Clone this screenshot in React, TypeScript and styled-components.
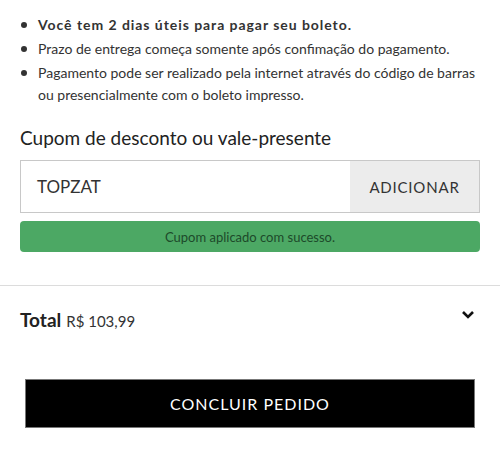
import React from "react";
import styled, { createGlobalStyle } from "styled-components";

const Global = createGlobalStyle`
  html, body { margin: 0; padding: 0; background: #fff; }
  body { font-family: Lato, "Open Sans", sans-serif; color: #333; }
  * { box-sizing: border-box; }
`;

const Page = styled.div`
  width: 500px;
  height: 450px;
  overflow: hidden;
  display: flex;
  flex-direction: column;
`;

const Section = styled.div`
  padding: 0 20px;
`;

const List = styled.ul`
  margin: 0;
  padding: 14px 0 0 18px;
  list-style: none;
  display: flex;
  flex-direction: column;
  gap: 2px;
`;

const Item = styled.li<{ $bold?: boolean }>`
  position: relative;
  font-size: 14px;
  line-height: 22px;
  color: #333;
  font-weight: ${(p) => (p.$bold ? 700 : 400)};
  letter-spacing: ${(p) => (p.$bold ? "0.95px" : "0")};
  &::before {
    content: "";
    position: absolute;
    left: -17px;
    top: 8px;
    width: 6px;
    height: 6px;
    border-radius: 50%;
    background: #333;
  }
`;

const Heading = styled.h2`
  margin: 19px 0 9px;
  font-size: 19px;
  line-height: 26px;
  font-weight: 400;
  color: #222;
`;

const CouponRow = styled.div`
  display: flex;
  height: 53px;
  border: 1px solid #c8c8c8;
`;

const CouponInput = styled.div`
  flex: 1;
  display: flex;
  align-items: center;
  padding-left: 16px;
  font-size: 17px;
  color: #333;
  background: #fff;
`;

const AddButton = styled.div`
  width: 129px;
  display: flex;
  align-items: center;
  justify-content: center;
  background: #ececec;
  font-size: 15px;
  letter-spacing: 0.8px;
  color: #333;
`;

const Success = styled.div`
  margin-top: 8px;
  height: 31px;
  border-radius: 4px;
  background: #4ca864;
  color: #1d4a2a;
  font-size: 13px;
  display: flex;
  align-items: center;
  justify-content: center;
`;

const Divider = styled.hr`
  margin: 33px 0 0;
  border: none;
  border-top: 1px solid #dcdcdc;
`;

const TotalRow = styled.div`
  display: flex;
  align-items: flex-start;
  justify-content: space-between;
  padding: 22px 20px 0;
`;

const TotalLabel = styled.div`
  display: flex;
  align-items: baseline;
  gap: 5px;
`;

const TotalWord = styled.span`
  font-size: 19px;
  font-weight: 700;
  color: #222;
`;

const TotalValue = styled.span`
  font-size: 15px;
  color: #333;
`;

const Chevron = styled.svg`
  margin-top: 2px;
  margin-right: 5px;
`;

const Finish = styled.div`
  margin: 48px 25px 0;
  height: 49px;
  background: #000;
  border: 1px solid #777;
  color: #fff;
  font-size: 16px;
  letter-spacing: 1px;
  display: flex;
  align-items: center;
  justify-content: center;
`;

export default function App() {
  return (
    <Page>
      <Global />
      <Section>
        <List>
          <Item $bold>Você tem 2 dias úteis para pagar seu boleto.</Item>
          <Item>Prazo de entrega começa somente após confimação do pagamento.</Item>
          <Item>
            Pagamento pode ser realizado pela internet através do código de barras ou
            presencialmente com o boleto impresso.
          </Item>
        </List>
        <Heading>Cupom de desconto ou vale-presente</Heading>
        <CouponRow>
          <CouponInput>TOPZAT</CouponInput>
          <AddButton>ADICIONAR</AddButton>
        </CouponRow>
        <Success>Cupom aplicado com sucesso.</Success>
      </Section>
      <Divider />
      <TotalRow>
        <TotalLabel>
          <TotalWord>Total</TotalWord>
          <TotalValue>R$ 103,99</TotalValue>
        </TotalLabel>
        <Chevron width="14" height="10" viewBox="0 0 14 10">
          <path d="M2 2 L7 7 L12 2" fill="none" stroke="#111" strokeWidth="2.6" />
        </Chevron>
      </TotalRow>
      <Finish>CONCLUIR PEDIDO</Finish>
    </Page>
  );
}
